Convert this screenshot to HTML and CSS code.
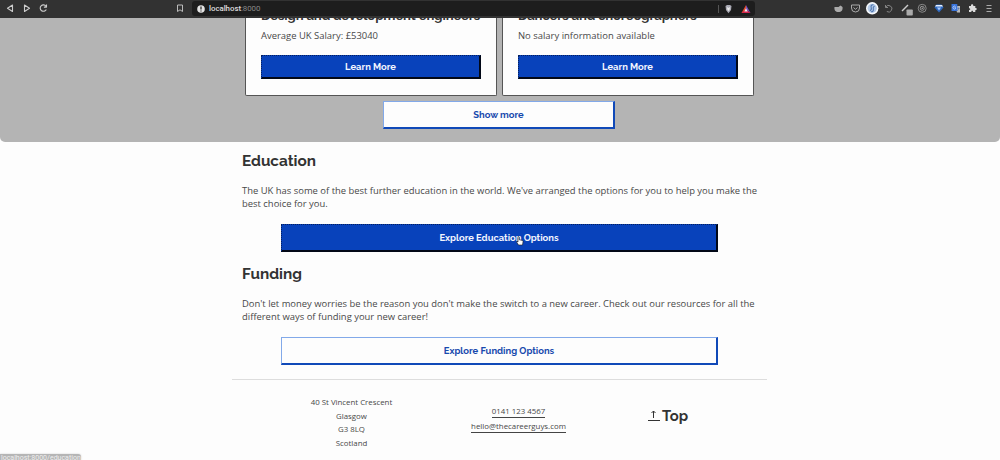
FILE: index.html
```html
<!DOCTYPE html>
<html lang="en">
<head>
<meta charset="utf-8">
<title>The Career Guys</title>
<link rel="stylesheet" href="styles.css">
</head>
<body>
<header class="toolbar">
  <svg class="nav" width="60" height="18" viewBox="0 0 60 18" fill="none" stroke="#ccc" stroke-width="1.1" stroke-linejoin="round">
    <path d="M12.500 5v6.500L7.500 8.250zM24.500 5v6.500l5-3.250z"/><path d="M46 6.200A3.200 3.200 0 1 0 46.300 9.400M46.500 4.500v2.600h-2.600"/>
  </svg>
  <svg class="bookmark" width="8" height="18" viewBox="0 0 8 18" fill="none" stroke="#bbb"><path d="M1.500 5h5v6.500L4 9.800l-2.500 1.700z"/></svg>
  <div class="address-bar">
    <svg width="8" height="8" viewBox="0 0 8 8"><circle cx="4" cy="4" r="3.800" fill="#e4e4e4"/><path d="M4 1.500v3M4 5.500v1" stroke="#222" stroke-width="1.200"/></svg>
    <span class="url"><b>localhost</b>:8000</span>
    <svg class="shields" width="40" height="16" viewBox="0 0 40 16">
      <path d="M3.500 4v8" stroke="#555"/>
      <path d="M10.500 5l1.500-1h3l1.500 1-.5 4-2.500 3.300L11 9z" fill="#a9a9b3"/><path d="M12 6l1.500 1L15 6l-.5 3-1 1-1-1z" fill="#eee"/>
      <path d="M31 4l-4.500 8H31V8.500z" fill="#e34b2c"/><path d="M31 4l4.500 8L31 8.500z" fill="#7650c0"/><path d="M26.500 12L31 8.500l4.500 3.500z" fill="#d6244e"/><path d="M31 7.200l1.700 3.200h-3.400z" fill="#eee"/>
    </svg>
  </div>
  <svg class="extensions" width="170" height="18" viewBox="0 0 170 18" fill="none">
    <path d="M4.500 7h4l2-1.500L12.500 7c.5 3-1 5-4 5-3 0-4.500-2-4-5z" fill="#aaa"/>
    <path d="M21.500 5h8v3a4 4 0 0 1-8 0zM23.500 7.500l2 1.800 2-1.800" stroke="#aaa"/>
    <circle cx="42.200" cy="8.300" r="6.200" fill="#f7f9fc"/><circle cx="42.200" cy="8.300" r="4.600" fill="#b4cae8"/><path d="M43.500 4.800c-2.500-.2-2.700 1.500-2.300 2.800s-.4 2.700-1.200 3.100m1 1c2.300.2 2.700-1.500 2.300-2.800s.3-2.500 1.200-3" stroke="#5178b0" stroke-width="1.100"/>
    <path d="M55.500 5v2.500H58M55.800 7a3.300 3.300 0 1 1 1 4.500" stroke="#858585"/>
    <path d="M72 11l6-6" stroke="#ccc" stroke-width="1.400"/><rect x="76.500" y="9.500" width="6.300" height="6" rx=".8" fill="#aaa"/>
    <circle cx="92.200" cy="8.300" r="4" stroke="#888"/><circle cx="92.200" cy="8.300" r="2" stroke="#999"/><circle cx="92.200" cy="8.300" r=".7" fill="#bbb"/>
    <path d="M106.500 4.500h5l2 3-4.500 5-4.500-5z" fill="#2d67bd"/><path d="M106 5h6l1 1.500h-8z" fill="#e6efff"/><path d="M107 7.500h4l-2 3z" fill="#a7caff"/>
    <path d="M125 6h5v6.500h-3z" fill="#bbb"/><rect x="121.500" y="4" width="5.800" height="7" rx=".6" fill="#3974dc"/><path d="M125.500 6.500a1.500 1.500 0 1 0 0 2.200V7.600h-1" stroke="#dce8ff" stroke-width=".7"/><path d="M127.500 8.500h2m-1-1v1c0 1-.5 1.800-1.200 2.300" stroke="#456bb5" stroke-width=".6"/>
    <path d="M139 6h2c-.5-2.500 2.800-2.500 2.300 0h2v2c2-.4 2 2.500 0 2.100v2h-2.200c.2-1.800-2-1.800-1.800 0H139v-2c1.700.2 1.700-2.100 0-1.900z" fill="#ddd"/>
    <path d="M156.500 5.500h5M156.500 8.500h5M156.500 11.500h5" stroke="#aaa"/>
  </svg>
</header>
<main>
  <section class="careers">
    <div class="cards">
      <article class="card"><h3 class="job">Design and development engineers</h3><p class="salary">Average UK Salary: £53040</p><a class="button primary learn">Learn More</a></article>
      <article class="card"><h3 class="job">Dancers and choreographers</h3><p class="salary">No salary information available</p><a class="button primary learn">Learn More</a></article>
    </div>
    <a class="button outline more">Show more</a>
  </section>
  <section class="topic">
    <h2>Education</h2>
    <p>The UK has some of the best further education in the world. We've arranged the options for you to help you make the<br>best choice for you.</p>
    <a class="button primary explore">Explore Education Options
      <svg class="pointer" width="8" height="10" viewBox="0 0 8 10"><path d="M2 1.200c0-1 1.200-1 1.200 0v2.500l3 .7c.8.300 1 .8.800 1.600L6.500 9h-4L.8 6.300C.2 5.300 1.200 5 2 6z" fill="#fff" stroke="#222" stroke-width=".65"/></svg>
    </a>
  </section>
  <section class="topic">
    <h2>Funding</h2>
    <p>Don't let money worries be the reason you don't make the switch to a new career. Check out our resources for all the<br>different ways of funding your new career!</p>
    <a class="button outline explore">Explore Funding Options</a>
  </section>
</main>
<footer class="footer">
  <address class="address">40 St Vincent Crescent<br>Glasgow<br>G3 8LQ<br>Scotland</address>
  <div class="contact"><a>0141 123 4567</a><a>hello@thecareerguys.com</a></div>
  <a class="top"><svg width="12" height="14" viewBox="0 0 12 14" fill="none" stroke="#333"><path d="M5.500 9V2M3.500 4l2-2 2 2M0 11.500h12"/></svg><span>Top</span></a>
</footer>
<div class="status">localhost:8000/education</div>
</body>
</html>
```
FILE: styles.css
```css
* { box-sizing: border-box; }
body { margin: 0; height: 460px; overflow: hidden; background: #fdfdfd; color: #484848; font-family: "Open Sans", sans-serif; }
h2, h3, p { margin: 0; }
h2, h3, .button, .top { font-family: Raleway, Inter, sans-serif; font-weight: 700; }

.toolbar { position: relative; z-index: 1; display: flex; height: 18px; background: #323232; }
.nav { margin-right: 116px; }
.bookmark { margin-right: 8px; }
.address-bar { display: flex; align-items: center; width: 563px; height: 15px; margin-top: 1px; padding-left: 5px; border-radius: 3px; background: #1d1d1d; }
.url { margin-left: 4px; color: #888; font: 7.9px Roboto, sans-serif; letter-spacing: -0.05px; }
.url b { color: #ddd; font-weight: 500; }
.shields { margin-left: auto; }
.extensions { margin-left: 75px; }

.careers { height: 124px; border-radius: 0 0 5px 5px; background: #b4b4b4; }
.cards { display: flex; gap: 5px; height: 78px; margin-left: 245px; }
.card { width: 252px; height: 78px; padding: 0 15px; border: 1px solid #555; border-top: 0; border-radius: 0 0 2px 2px; background: #fdfdfd; }
.job { height: 20px; margin-top: -10px; color: #333; font-size: 13.1px; line-height: 16px; white-space: nowrap; letter-spacing: -0.13px; }
.salary { height: 27px; font-size: 9.45px; line-height: 15px; }

.button { display: flex; align-items: center; justify-content: center; font-size: 9.4px; }
.primary { border: 1px dotted #05205f; border-right: 2px solid #020817; border-bottom: 2px solid #020817; background: #0842bb; color: #f2f5ff; }
.outline { border: 1px solid #82a9e9; border-right: 2px solid #1049b8; border-bottom: 2px solid #1049b8; background: #fdfdfd; color: #1749ad; }
.learn { width: 220px; height: 24px; }
.more { width: 232px; height: 28px; margin: 5px auto 0 383px; }

.topic { width: 516px; height: 113px; margin-left: 242px; padding-top: 9px; }
.topic h2 { height: 32.5px; color: #333; font-size: 15.3px; line-height: 20px; }
.topic p { height: 40.5px; font-size: 9.43px; line-height: 13.5px; white-space: nowrap; }
.explore { position: relative; width: 437px; height: 28px; margin-left: 39px; }
.pointer { position: absolute; left: 234px; top: 11px; }

.footer { display: flex; width: 535px; height: 81px; margin: 11px 0 0 232px; border-top: 1px solid #ddd; }
.address { width: 239px; padding-top: 16px; text-align: center; font-size: 7.85px; font-style: normal; line-height: 13.5px; }
.contact { display: flex; flex-direction: column; align-items: center; width: 95px; padding-top: 26px; gap: 3px; font-size: 7.85px; line-height: 11px; }
.contact a { border-bottom: 1px solid #444; white-space: nowrap; }
.top { display: flex; gap: 2px; height: 20px; margin: 26px 0 0 82px; color: #333; font-size: 14.8px; line-height: 20px; }
.top svg { margin-top: 3px; }
.status { position: absolute; left: 0; bottom: 0; width: 81px; height: 6px; overflow: hidden; border-radius: 0 3px 0 0; background: #b5b5b5; color: #eee; font: 7px/9px Roboto, sans-serif; padding-left: 1px; box-shadow: 0 0 2px #ccc; }
```
